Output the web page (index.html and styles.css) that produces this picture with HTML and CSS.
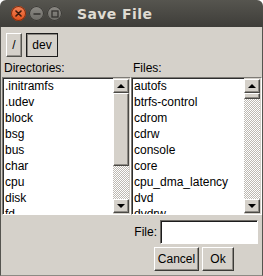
FILE: index.html
```html
<!DOCTYPE html>
<html lang="en">
<head>
    <meta charset="UTF-8">
    <meta name="viewport" content="width=device-width, initial-scale=1.0">
    <title>Save File</title>
    <link rel="stylesheet" href="styles.css">
</head>
<body>
    <div class="window">
        <div class="titlebar">
            <span class="wbtn close">
                <svg width="7" height="7" viewBox="0 0 7 7"><path d="M1 1L6 6M6 1L1 6" stroke="#3a1a0c" stroke-width="1.6" stroke-linecap="round"/></svg>
            </span>
            <span class="wbtn">
                <svg width="8" height="8" viewBox="0 0 8 8"><path d="M0.5 4H7.5" stroke="#33322f" stroke-width="1.5"/></svg>
            </span>
            <span class="wbtn">
                <svg width="8" height="8" viewBox="0 0 8 8"><rect x="1" y="1" width="6" height="6" fill="none" stroke="#33322f" stroke-width="1.3"/></svg>
            </span>
            <span class="title">Save File</span>
        </div>

        <div class="content">
            <div class="path">
                <button class="pbtn">/</button>
                <button class="pbtn current">dev</button>
            </div>

            <div class="panes">
                <div class="pane">
                    <div class="label">Directories:</div>
                    <div class="listbox">
                        <ul class="items">
                            <li>.initramfs</li>
                            <li>.udev</li>
                            <li>block</li>
                            <li>bsg</li>
                            <li>bus</li>
                            <li>char</li>
                            <li>cpu</li>
                            <li>disk</li>
                            <li>fd</li>
                            <li>hugepages</li>
                        </ul>
                        <div class="scroll">
                            <div class="arrow up"></div>
                            <div class="thumb dir-thumb"></div>
                            <div class="trough"></div>
                            <div class="arrow down"></div>
                        </div>
                    </div>
                </div>

                <div class="pane">
                    <div class="label">Files:</div>
                    <div class="listbox">
                        <ul class="items">
                            <li>autofs</li>
                            <li>btrfs-control</li>
                            <li>cdrom</li>
                            <li>cdrw</li>
                            <li>console</li>
                            <li>core</li>
                            <li>cpu_dma_latency</li>
                            <li>dvd</li>
                            <li>dvdrw</li>
                            <li>ecryptfs</li>
                        </ul>
                        <div class="scroll">
                            <div class="arrow up"></div>
                            <div class="thumb file-thumb"></div>
                            <div class="trough"></div>
                            <div class="arrow down"></div>
                        </div>
                    </div>
                </div>
            </div>

            <div class="filerow">
                <span class="file-label">File:</span>
                <div class="entry"></div>
            </div>

            <div class="actions">
                <button class="btn cancel">Cancel</button>
                <button class="btn ok">Ok</button>
            </div>
        </div>
    </div>
</body>
</html>
```

FILE: styles.css
```css
body {
    margin: 0;
    background: #ffffff;
    font-family: "Liberation Sans", Arial, sans-serif;
    font-size: 12px;
    color: #000;
}

.window {
    width: 263px;
    height: 276px;
    display: flex;
    flex-direction: column;
    border-radius: 6px 6px 0 0;
    overflow: hidden;
    box-sizing: border-box;
}

/* barra de titulo */
.titlebar {
    height: 27px;
    flex: none;
    display: flex;
    align-items: center;
    padding-left: 11px;
    background: linear-gradient(#56554f, #3e3d39);
    box-sizing: border-box;
}

.wbtn {
    width: 15px;
    height: 15px;
    border-radius: 50%;
    margin-right: 3px;
    display: flex;
    justify-content: center;
    align-items: center;
    background: linear-gradient(#8c8a85, #6c6b66);
    box-shadow: inset 0 0 0 1px #3a3935;
    box-sizing: border-box;
}

.wbtn.close {
    background: linear-gradient(#f5855a, #e0501b);
    box-shadow: inset 0 0 0 1px #7e2d0f;
}

.title {
    margin-left: 12px;
    color: #dfdbd2;
    font-family: "DejaVu Sans", sans-serif;
    font-weight: bold;
    font-size: 14px;
    letter-spacing: 0.4px;
}

.content {
    flex: 1;
    display: flex;
    flex-direction: column;
    background: #d5d1ca;
    border-left: 1px solid #55544f;
    border-right: 1px solid #55544f;
    border-bottom: 1px solid #8d8a84;
}

.path {
    display: flex;
    gap: 4px;
    padding: 6px 0 0 5px;
}

.pbtn {
    height: 24px;
    margin: 0;
    padding: 0;
    font-family: inherit;
    font-size: 12px;
    background: #d5d1ca;
    border: 1px solid;
    border-color: #ffffff #55544f #55544f #ffffff;
    box-shadow: inset -1px -1px #96938d;
}

.pbtn:first-child {
    width: 16px;
}

.pbtn.current {
    width: 32px;
    border-color: #1c1c1c;
    box-shadow: inset 1px 1px #8a8782;
}

.panes {
    display: grid;
    grid-template-columns: 129px 131px;
    margin-top: 3px;
    padding-left: 1px;
}

.label {
    height: 17px;
    line-height: 17px;
    padding-left: 2px;
}

.listbox {
    height: 138px;
    display: flex;
    box-sizing: border-box;
    border: 1px solid;
    border-color: #7e7b76 #ffffff #ffffff #7e7b76;
    box-shadow: inset 1px 1px #2e2e2e;
    background: #ffffff;
    overflow: hidden;
}

.items {
    flex: 1;
    list-style: none;
    margin: 0;
    padding: 0 0 0 2px;
    overflow: hidden;
}

.items li {
    height: 16px;
    line-height: 16px;
    white-space: nowrap;
}

.scroll {
    width: 16px;
    flex: none;
    display: flex;
    flex-direction: column;
    padding: 1px 1px 1px 0;
    background: #d5d1ca;
}

.arrow,
.thumb {
    flex: none;
    box-sizing: border-box;
    background: #d5d1ca;
    border: 1px solid;
    border-color: #ffffff #4a4945 #4a4945 #ffffff;
    box-shadow: inset -1px -1px #8e8b85;
    display: flex;
    justify-content: center;
    align-items: center;
}

.arrow {
    height: 14px;
}

.arrow::after {
    content: '';
    width: 0;
    height: 0;
    border-left: 4px solid transparent;
    border-right: 4px solid transparent;
}

.arrow.up::after {
    border-bottom: 4px solid #000;
}

.arrow.down::after {
    border-top: 4px solid #000;
}

.dir-thumb {
    height: 73px;
}

.file-thumb {
    height: 6px;
}

.trough {
    flex: 1;
    background-image: repeating-conic-gradient(#ffffff 0 25%, #bdb9b2 0 50%);
    background-size: 2px 2px;
}

.filerow {
    display: flex;
    align-items: center;
    justify-content: flex-end;
    gap: 3px;
    margin-top: 5px;
    padding-right: 4px;
}

.entry {
    width: 98px;
    height: 24px;
    box-sizing: border-box;
    background: #ffffff;
    border: 1px solid;
    border-color: #6e6b66 #ffffff #ffffff #6e6b66;
    box-shadow: inset 1px 1px #1c1c1c;
}

.actions {
    display: flex;
    justify-content: flex-end;
    gap: 3px;
    margin-top: 3px;
    padding-right: 28px;
}

.btn {
    height: 24px;
    margin: 0;
    padding: 0;
    font-family: inherit;
    font-size: 12px;
    background: #d5d1ca;
    border: 1px solid;
    border-color: #ffffff #3c3b37 #3c3b37 #ffffff;
    box-shadow: inset -1px -1px #8e8b85;
}

.cancel {
    width: 45px;
}

.ok {
    width: 32px;
}
```
